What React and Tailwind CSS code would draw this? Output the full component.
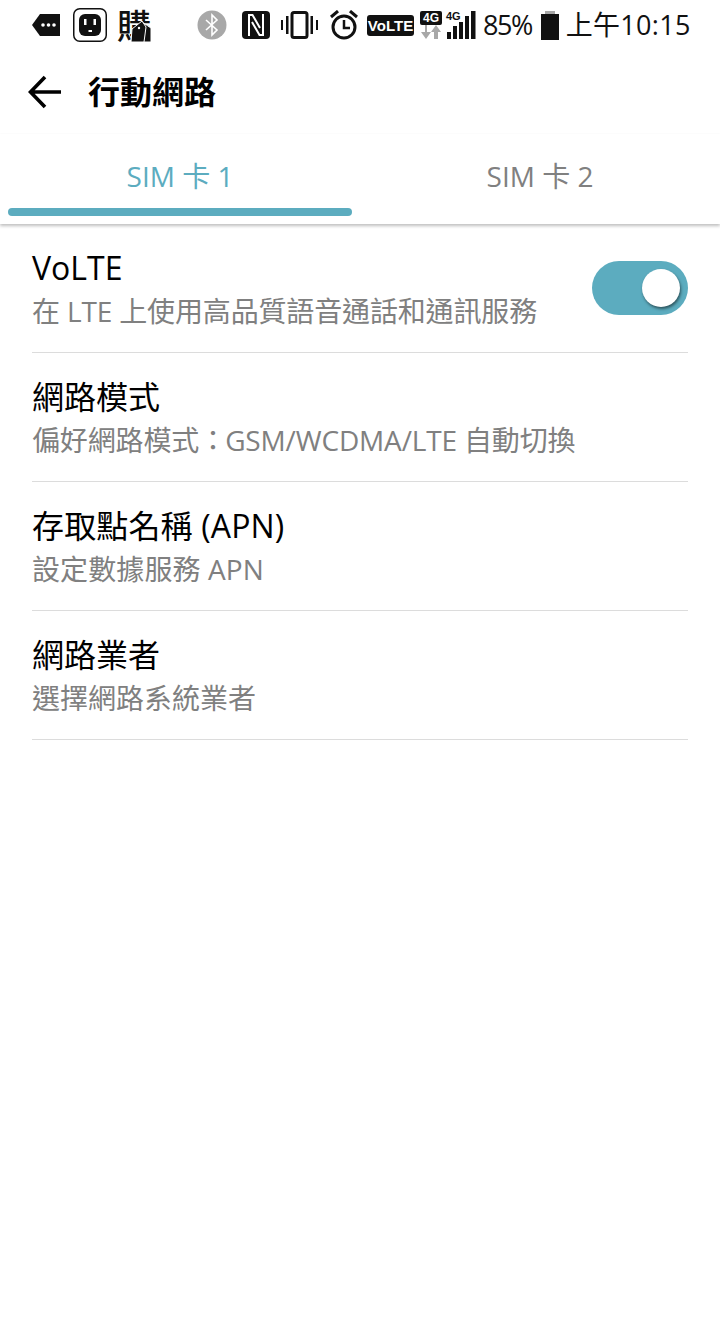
import React from 'react';

const font = { fontFamily: '"Open Sans", "Noto Sans CJK TC", sans-serif' };

const rows = [
  { title: 'VoLTE', sub: '在 LTE 上使用高品質語音通話和通訊服務', subClass: 'tracking-[-0.15px]', toggle: true },
  {
    title: '網路模式',
    sub: (
      <>
        偏好網路模式<span className="tracking-[-2px]">：</span>GSM/WCDMA/LTE 自動切換
      </>
    ),
    subClass: 'tracking-[-0.15px]',
  },
  { title: '存取點名稱 (APN)', titleClass: 'tracking-[0.15px]', sub: '設定數據服務 APN', subClass: 'tracking-[0.1px]' },
  { title: '網路業者', sub: '選擇網路系統業者' },
];

const StatusIcons = () => (
  <div className="h-[50px] flex items-center text-[#111] pl-[32px] pr-[30px]">
    {/* tag with dots */}
    <svg width="28" height="22" viewBox="0 0 28 22" className="shrink-0">
      <path d="M8 0H28V22H8L0 11Z" fill="#111" />
      <circle cx="11" cy="11" r="1.8" fill="#fff" />
      <circle cx="16.5" cy="11" r="1.8" fill="#fff" />
      <circle cx="22" cy="11" r="1.8" fill="#fff" />
    </svg>
    {/* plug */}
    <svg width="34" height="34" viewBox="0 0 34 34" className="shrink-0 ml-[13px]">
      <rect x="0.75" y="0.75" width="32.5" height="32.5" rx="6" fill="#fff" stroke="#111" strokeWidth="1.5" />
      <rect x="6" y="6" width="22" height="22" rx="6" fill="#111" />
      <rect x="11" y="11" width="2.5" height="6" fill="#fff" />
      <rect x="20.5" y="11" width="2.5" height="6" fill="#fff" />
      <rect x="15.5" y="22" width="3.5" height="2" fill="#fff" />
    </svg>
    {/* shopping app: the character with a bag over it */}
    <div className="relative w-[34px] h-[34px] ml-[10px] shrink-0">
      <span className="absolute left-0 top-[-4px] text-[34px] leading-[42px] font-medium" style={{ fontFamily: '"Noto Sans CJK TC", sans-serif' }}>購</span>
      <svg width="34" height="34" viewBox="0 0 34 34" className="absolute left-0 top-0">
        <path d="M25 14L34 20V34H24Z" fill="#111" stroke="#fff" strokeWidth="1" />
        <path d="M20 17L25 13L29 19L27 34H14L15 21Z" fill="#111" stroke="#fff" strokeWidth="1" />
        <circle cx="22" cy="20" r="1.2" fill="#fff" />
      </svg>
    </div>
    {/* bluetooth */}
    <svg width="30" height="30" viewBox="0 0 30 30" className="shrink-0 ml-[46px]">
      <circle cx="15" cy="15" r="14.5" fill="#a8a8a8" />
      <path d="M9 10L20 20L15 25V5L20 10L9 20" fill="none" stroke="#fff" strokeWidth="1.6" />
    </svg>
    {/* nfc */}
    <svg width="28" height="28" viewBox="0 0 28 28" className="shrink-0 ml-[15px]">
      <rect width="28" height="28" rx="4" fill="#111" />
      <path d="M7 25V4H10.5L18 17" fill="none" stroke="#fff" strokeWidth="2" />
      <path d="M21 3V24H17.5L10 11" fill="none" stroke="#fff" strokeWidth="2" />
    </svg>
    {/* vibrate */}
    <svg width="37" height="28" viewBox="0 0 37 28" className="shrink-0 ml-[11px]">
      <rect x="11" y="1.5" width="15" height="25" rx="2" fill="none" stroke="#111" strokeWidth="3" />
      <rect x="0" y="9" width="2" height="10" fill="#111" />
      <rect x="5" y="5" width="2.5" height="18" fill="#111" />
      <rect x="29.5" y="5" width="2.5" height="18" fill="#111" />
      <rect x="35" y="9" width="2" height="10" fill="#111" />
    </svg>
    {/* alarm */}
    <svg width="28" height="30" viewBox="0 0 28 30" className="shrink-0 ml-[12px]">
      <circle cx="14" cy="17" r="11" fill="none" stroke="#111" strokeWidth="3" />
      <path d="M14 10V18H20" fill="none" stroke="#111" strokeWidth="2.5" />
      <path d="M1 7L8 1" stroke="#111" strokeWidth="3" />
      <path d="M27 7L20 1" stroke="#111" strokeWidth="3" />
    </svg>
    {/* VoLTE badge */}
    <div className="shrink-0 ml-[9px] w-[47px] h-[21px] bg-[#111] rounded-[3px] flex items-center justify-center text-white text-[15px] leading-none font-bold" style={{ fontFamily: '"Liberation Sans", sans-serif' }}>
      VoLTE
    </div>
    {/* 4G with arrows */}
    <div className="shrink-0 ml-[6px] w-[22px] flex flex-col items-center">
      <div className="w-[22px] h-[14px] bg-[#111] rounded-[2px] text-white text-[12px] leading-[14px] text-center font-bold" style={{ fontFamily: '"Liberation Sans", sans-serif' }}>4G</div>
      <svg width="22" height="14" viewBox="0 0 22 14">
        <path d="M6 0V7H10L5 14L0 7H4V0Z" fill="#a8a8a8" transform="translate(1,0)" />
        <path d="M15 0L20 7H17V14H13V7H10Z" fill="#a8a8a8" transform="translate(1,0)" />
      </svg>
    </div>
    {/* signal */}
    <div className="relative shrink-0 ml-[4px] w-[30px] h-[28px]">
      <span className="absolute left-0 top-[-1px] text-[11px] leading-[12px] font-bold" style={{ fontFamily: '"Liberation Sans", sans-serif' }}>4G</span>
      <svg width="30" height="28" viewBox="0 0 30 28" className="absolute left-0 top-0">
        <rect x="1" y="21" width="4" height="7" fill="#111" />
        <rect x="7" y="15" width="4" height="13" fill="#111" />
        <rect x="13" y="11" width="4" height="17" fill="#111" />
        <rect x="19" y="5" width="4" height="23" fill="#111" />
        <rect x="25" y="0" width="4.5" height="28" fill="#111" />
      </svg>
    </div>
    <span className="shrink-0 ml-[7px] mt-[-2px] text-[27px] leading-none tracking-[-1.5px]">85%</span>
    {/* battery */}
    <svg width="18" height="29" viewBox="0 0 18 29" className="shrink-0 ml-[9px]">
      <rect x="4" y="0" width="10" height="4" fill="#a8a8a8" />
      <rect x="0" y="3" width="18" height="26" fill="#111" />
    </svg>
    <span className="shrink-0 ml-[7px] mt-[-2px] text-[27px] leading-none tracking-[0.3px]">上午10:15</span>
  </div>
);

export default function App() {
  return (
    <div className="w-[720px] h-[1336px] bg-white overflow-hidden" style={font}>
      <StatusIcons />

      <div className="h-[84px] flex items-center pl-[28px]">
        <svg width="34" height="34" viewBox="0 0 34 34" className="shrink-0 mt-[-1px]">
          <path d="M33 17H3M17 2L2.5 17L17 32" fill="none" stroke="#000" strokeWidth="3.6" />
        </svg>
        <h1 className="ml-[26px] text-[32px] font-bold text-black leading-none">行動網路</h1>
      </div>

      <div className="h-[90px] flex relative shadow-[0_2px_3px_rgba(0,0,0,0.25)] z-10">
        <div className="w-[360px] px-[8px] flex flex-col">
          <div className="flex-1 flex items-end justify-center text-[28px] leading-[38px] text-[#5cacbf] pb-[13px]">SIM 卡 1</div>
          <div className="h-[8px] bg-[#5cacbf] rounded-full mb-[8px]"></div>
        </div>
        <div className="w-[360px] px-[8px] flex flex-col">
          <div className="flex-1 flex items-end justify-center text-[28px] leading-[38px] text-[#808080] pb-[13px]">SIM 卡 2</div>
          <div className="h-[8px] mb-[8px]"></div>
        </div>
      </div>

      <div className="px-[32px]">
        {rows.map((row) => (
          <div key={row.title} className="h-[129px] border-b border-[#dcdcdc] flex items-center justify-between">
            <div className="pt-[2px]">
              <div className={`text-[32px] leading-[44px] text-black ${row.titleClass || ''}`}>{row.title}</div>
              <div className={`text-[28px] leading-[42px] text-[#808080] ${row.subClass || ''}`}>{row.sub}</div>
            </div>
            {row.toggle && (
              <div className="w-[96px] h-[54px] rounded-full bg-[#5cacbf] flex items-center justify-end pr-[8px]">
                <div className="w-[38px] h-[38px] rounded-full bg-white shadow-[1px_2px_3px_rgba(0,0,0,0.5)]"></div>
              </div>
            )}
          </div>
        ))}
      </div>
    </div>
  );
}
